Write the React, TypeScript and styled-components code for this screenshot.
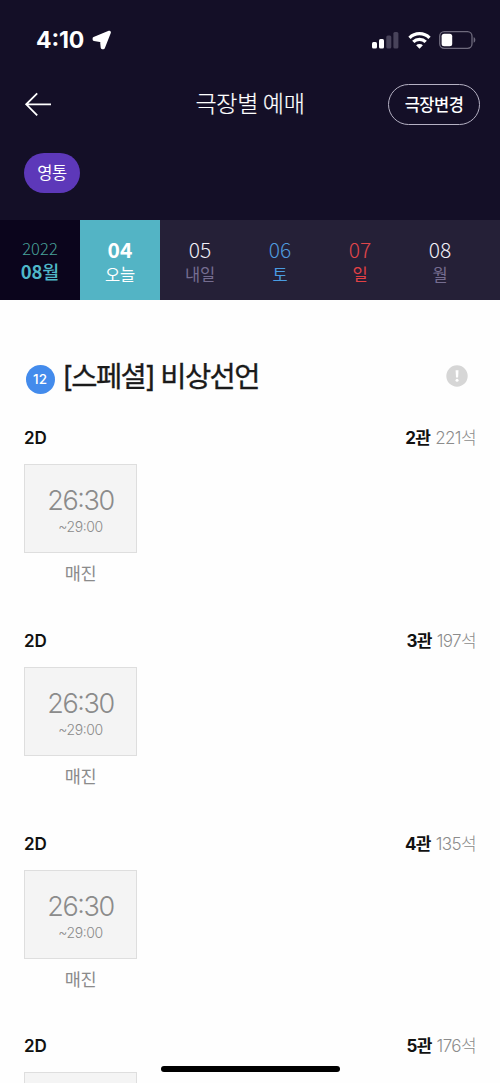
import React from "react";
import styled, { createGlobalStyle } from "styled-components";

const GlobalStyle = createGlobalStyle`
  * { box-sizing: border-box; }
  html, body { margin: 0; height: 100%; overflow: hidden; background: #fff; }
  body { font-family: Inter, "Noto Sans CJK KR", sans-serif; }
  button { font: inherit; margin: 0; padding: 0; border: 0; background: none; cursor: pointer; }
  h1, h2 { margin: 0; }
`;

const Screen = styled.div`
  position: relative;
  width: 500px;
  height: 1083px;
  overflow: hidden;
  background: #fefefe;
`;

const TopArea = styled.header`
  height: 220px;
  background: #140f27;
  color: #fff;
`;

const StatusBar = styled.div`
  height: 80px;
  padding: 0 24px 0 36px;
  display: flex;
  justify-content: space-between;
  align-items: center;
`;

const StatusGroup = styled.div<{ $gap: number }>`
  display: flex;
  align-items: center;
  gap: ${(p) => p.$gap}px;
`;

const Clock = styled.span`
  width: 50px;
  font: 700 23px/28px Inter, sans-serif;
  font-feature-settings: "case" 1;
  letter-spacing: -0.1px;
  white-space: nowrap;
`;

const TitleBar = styled.div`
  height: 48px;
  padding: 0 20px 0 24px;
  display: grid;
  grid-template-columns: 92px 1fr 92px;
  align-items: center;
`;

const BackButton = styled.button`
  display: flex;
  color: #fff;
`;

const PageTitle = styled.h1`
  padding: 0 4px 4px 0;
  text-align: center;
  font: 300 23px/32px "Noto Sans CJK KR", sans-serif;
  letter-spacing: -0.3px;
  color: #fff;
  -webkit-text-stroke: 0.2px #fff;
`;

const ChangeButton = styled.button`
  height: 41px;
  padding: 0 0 1px;
  border: 1px solid #b5b1c3;
  border-radius: 21px;
  color: #fff;
  font: 500 16.5px/24px "Noto Sans CJK KR", sans-serif;
  letter-spacing: -0.5px;
`;

const TheaterRow = styled.div`
  padding: 25px 24px 0;
  display: flex;
`;

const TheaterChip = styled.button`
  width: 56px;
  height: 40px;
  padding-bottom: 2px;
  border-radius: 20px;
  background: #5d38b9;
  color: #fff;
  font: 400 16.5px/24px "Noto Sans CJK KR", sans-serif;
  letter-spacing: -0.4px;
`;

const DateStrip = styled.nav`
  display: flex;
  height: 80px;
  background: #252037;
  font-family: "Noto Sans CJK KR", sans-serif;
`;

const MonthCell = styled.div`
  width: 80px;
  padding-top: 17px;
  background: #0b051c;
  text-align: center;
`;

const YearText = styled.div`
  font-size: 16.5px;
  line-height: 22px;
  font-weight: 300;
  letter-spacing: 0.1px;
  color: #48a299;
`;

const MonthText = styled.div`
  font-size: 18.5px;
  line-height: 24px;
  font-weight: 700;
  letter-spacing: -0.1px;
  color: #4fb8c9;
  span { font-weight: 500; }
`;

const DateCell = styled.button<{ $active?: boolean }>`
  width: 80px;
  height: 80px;
  padding-top: 3px;
  background: ${(p) => (p.$active ? "#53b4c5" : "transparent")};
`;

const DayNumber = styled.div<{ $color: string; $bold?: boolean }>`
  font-size: 21px;
  line-height: 25px;
  font-weight: ${(p) => (p.$bold ? 700 : 300)};
  color: ${(p) => p.$color};
`;

const DayName = styled.div<{ $color: string }>`
  font-size: 16.5px;
  line-height: 24px;
  letter-spacing: -0.3px;
  color: ${(p) => p.$color};
`;

const Listing = styled.main`
  padding: 54px 24px 0;
`;

const MovieRow = styled.div`
  height: 44px;
  display: flex;
  align-items: center;
`;

const AgeBadge = styled.span`
  width: 29px;
  height: 29px;
  margin: 6px 8px 0 1.5px;
  border-radius: 50%;
  background: #438bec;
  color: #fff;
  font-size: 13.5px;
  font-weight: 500;
  line-height: 29px;
  text-align: center;
`;

const MovieTitle = styled.h2`
  flex: 1;
  padding-top: 1px;
  font-size: 28.5px;
  line-height: 40px;
  font-weight: 400;
  letter-spacing: -1.6px;
  color: #1a1a1a;
  -webkit-text-stroke: 0.35px #1a1a1a;
`;

const InfoButton = styled.button`
  display: flex;
  margin-right: 8px;
`;

const Hall = styled.section`
  height: 202.8px;
  padding-top: 28px;
`;

const HallHeader = styled.div`
  height: 24px;
  display: flex;
  justify-content: space-between;
  font-size: 17px;
  line-height: 24px;
  color: #111;
`;

const Format = styled.span`
  font-weight: 600;
`;

const HallName = styled.span`
  font-weight: 700;
  letter-spacing: -0.6px;
`;

const Seats = styled.span`
  color: #8c8c8c;
  font-weight: 300;
  letter-spacing: -0.6px;
`;

const Showtime = styled.button`
  width: 113px;
  margin-top: 14px;
  display: block;
  text-align: center;
  color: #8b8b8b;
`;

const TimeBox = styled.div`
  height: 89px;
  padding-top: 19px;
  background: #f4f4f4;
  border: 1px solid #dedede;
  font-feature-settings: "case" 1;
`;

const StartTime = styled.div`
  font-size: 27px;
  line-height: 34px;
  font-weight: 300;
  letter-spacing: -1.4px;
`;

const EndTime = styled.div`
  font-size: 14px;
  line-height: 18px;
  font-weight: 300;
  letter-spacing: -0.4px;
`;

const SoldOut = styled.div`
  margin-top: 9px;
  font-size: 17.5px;
  line-height: 24px;
  letter-spacing: -0.3px;
`;

const HomeIndicator = styled.div`
  position: absolute;
  left: 161px;
  bottom: 11px;
  width: 179px;
  height: 6px;
  border-radius: 3px;
  background: #000;
`;

const LocationArrow = () => (
  <svg width="20" height="20" viewBox="0 0 20 20">
    <path d="M17.3 2.3 11.3 17.7H10.3L9.6 10.6 2.2 9.4V8.5Z" fill="#fff" stroke="#fff" strokeWidth="3.2" strokeLinejoin="round" />
  </svg>
);

const Signal = () => (
  <svg width="27" height="18" viewBox="0 0 27 18">
    <rect x="0" y="11" width="5" height="6.5" rx="1.5" fill="#fff" />
    <rect x="7" y="8" width="5" height="9.5" rx="1.5" fill="#fff" />
    <rect x="14.3" y="4.5" width="5" height="13" rx="1.5" fill="#48435a" />
    <rect x="21.4" y="1" width="5" height="16.5" rx="1.5" fill="#48435a" />
  </svg>
);

const Wifi = () => (
  <svg width="23" height="17" viewBox="0 0 23 17" fill="none" stroke="#fff" strokeWidth="3.3">
    <path d="M1.5 5.8a14.2 14.2 0 0 1 20 0" />
    <path d="M5.3 9.9a8.8 8.8 0 0 1 12.4 0" />
    <path d="M11.5 16.8 8.1 13.3a4.8 4.8 0 0 1 6.8 0Z" fill="#fff" stroke="none" />
  </svg>
);

const Battery = () => (
  <svg width="37" height="18" viewBox="0 0 37 18">
    <rect x=".7" y=".7" width="32.3" height="16.6" rx="4.5" fill="none" stroke="#6e6a7d" strokeWidth="1.3" />
    <rect x="2.6" y="2.7" width="10.6" height="12.6" rx="2.5" fill="#fff" />
    <path d="M34.6 6.3c2.3.5 2.3 4.9 0 5.4Z" fill="#6e6a7d" />
  </svg>
);

const BackArrow = () => (
  <svg width="28" height="26" viewBox="0 0 28 26" fill="none" stroke="#fff" strokeWidth="1.8">
    <path d="M13.2 2.3 2.2 13.3l11 11M2.2 13.3H27" />
  </svg>
);

const InfoIcon = () => (
  <svg width="22" height="22" viewBox="0 0 22 22">
    <circle cx="11" cy="11" r="10.7" fill="#d6d6d6" />
    <path d="M9.6 5.2h2.9l-.4 7.3H10Z" fill="#fff" />
    <circle cx="11.05" cy="15.2" r="1.5" fill="#fff" />
  </svg>
);

const days = [
  { num: "04", name: "오늘", numColor: "#fff", nameColor: "#fff", active: true },
  { num: "05", name: "내일", numColor: "#f1eff7", nameColor: "#756d90" },
  { num: "06", name: "토", numColor: "#4f9ade", nameColor: "#4a9ce2" },
  { num: "07", name: "일", numColor: "#e0464b", nameColor: "#e34145" },
  { num: "08", name: "월", numColor: "#f1eff7", nameColor: "#756d90" },
];

const halls = [
  { name: "2관", seats: "221석" },
  { name: "3관", seats: "197석" },
  { name: "4관", seats: "135석" },
];

const HallInfo = ({ name, seats }: { name: string; seats: string }) => (
  <HallHeader>
    <Format>2D</Format>
    <span>
      <HallName>{name}</HallName> <Seats>{seats}</Seats>
    </span>
  </HallHeader>
);

export default function App() {
  return (
    <Screen>
      <GlobalStyle />
      <TopArea>
        <StatusBar>
          <StatusGroup $gap={6}>
            <Clock>4:10</Clock>
            <LocationArrow />
          </StatusGroup>
          <StatusGroup $gap={8.5}>
            <Signal />
            <Wifi />
            <Battery />
          </StatusGroup>
        </StatusBar>
        <TitleBar>
          <BackButton aria-label="뒤로"><BackArrow /></BackButton>
          <PageTitle>극장별 예매</PageTitle>
          <ChangeButton>극장변경</ChangeButton>
        </TitleBar>
        <TheaterRow>
          <TheaterChip>영통</TheaterChip>
        </TheaterRow>
      </TopArea>
      <DateStrip>
        <MonthCell>
          <YearText>2022</YearText>
          <MonthText>08<span>월</span></MonthText>
        </MonthCell>
        {days.map((d) => (
          <DateCell key={d.num} $active={d.active}>
            <DayNumber $color={d.numColor} $bold={d.active}>{d.num}</DayNumber>
            <DayName $color={d.nameColor}>{d.name}</DayName>
          </DateCell>
        ))}
      </DateStrip>
      <Listing>
        <MovieRow>
          <AgeBadge>12</AgeBadge>
          <MovieTitle>[스페셜] 비상선언</MovieTitle>
          <InfoButton aria-label="정보"><InfoIcon /></InfoButton>
        </MovieRow>
        {halls.map((h) => (
          <Hall key={h.name}>
            <HallInfo {...h} />
            <Showtime>
              <TimeBox>
                <StartTime>26:30</StartTime>
                <EndTime>~29:00</EndTime>
              </TimeBox>
              <SoldOut>매진</SoldOut>
            </Showtime>
          </Hall>
        ))}
        <Hall>
          <HallInfo name="5관" seats="176석" />
          <Showtime>
            <TimeBox />
          </Showtime>
        </Hall>
      </Listing>
      <HomeIndicator />
    </Screen>
  );
}
